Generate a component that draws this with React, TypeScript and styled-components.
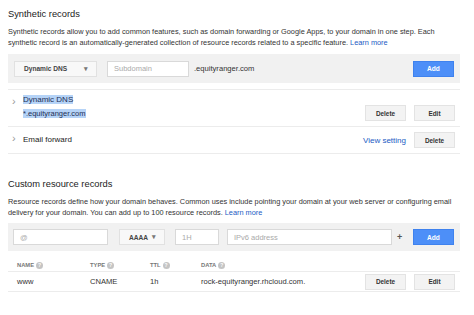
import React from "react";
import styled, { createGlobalStyle } from "styled-components";

const GlobalStyle = createGlobalStyle`
  body {
    margin: 0;
    background: #fff;
    font-family: "Liberation Sans", Arial, sans-serif;
    color: #222;
  }
`;

const App: React.FC = () => {
  return (
    <>
      <GlobalStyle />
      <Page>
        <Title>Synthetic records</Title>
        <Desc>
          Synthetic records allow you to add common features, such as domain forwarding or Google Apps, to your domain in one step. Each
          <br />
          synthetic record is an automatically-generated collection of resource records related to a specific feature. <Link>Learn more</Link>
        </Desc>
        <Panel>
          <Select width={83}>
            <span>Dynamic DNS</span>
            <Caret>▾</Caret>
          </Select>
          <Input width={82} style={{ marginLeft: 10 }}>
            <Placeholder>Subdomain</Placeholder>
          </Input>
          <Suffix>.equityranger.com</Suffix>
          <Spacer />
          <AddButton>Add</AddButton>
        </Panel>

        <List>
          <Row tall>
            <Chevron>›</Chevron>
            <RowText>
              <Selected>Dynamic DNS</Selected>
              <Sub><Selected>*.equityranger.com</Selected></Sub>
            </RowText>
            <Actions>
              <GrayButton>Delete</GrayButton>
              <GrayButton>Edit</GrayButton>
            </Actions>
          </Row>
          <Row>
            <Chevron>›</Chevron>
            <RowText>Email forward</RowText>
            <Actions>
              <Link>View setting</Link>
              <GrayButton>Delete</GrayButton>
            </Actions>
          </Row>
        </List>

        <Title second>Custom resource records</Title>
        <Desc>
          Resource records define how your domain behaves. Common uses include pointing your domain at your web server or configuring email
          <br />
          delivery for your domain. You can add up to 100 resource records. <Link>Learn more</Link>
        </Desc>
        <Panel compact>
          <Input width={95}>
            <Placeholder>@</Placeholder>
          </Input>
          <Select width={46} style={{ marginLeft: 11 }}>
            <span>AAAA</span>
            <Caret>▾</Caret>
          </Select>
          <Input width={44} style={{ marginLeft: 10 }}>
            <Placeholder>1H</Placeholder>
          </Input>
          <Input width={165} style={{ marginLeft: 8 }}>
            <Placeholder>IPv6 address</Placeholder>
          </Input>
          <Plus>+</Plus>
          <Spacer />
          <AddButton>Add</AddButton>
        </Panel>

        <Table>
          <HeadRow>
            <Cell w={73}>NAME <Help>?</Help></Cell>
            <Cell w={60}>TYPE <Help>?</Help></Cell>
            <Cell w={51}>TTL <Help>?</Help></Cell>
            <Cell>DATA <Help>?</Help></Cell>
          </HeadRow>
          <DataRow>
            <Cell w={73}>www</Cell>
            <Cell w={60}>CNAME</Cell>
            <Cell w={51}>1h</Cell>
            <Cell>rock-equityranger.rhcloud.com.</Cell>
            <Spacer />
            <Actions>
              <GrayButton>Delete</GrayButton>
              <GrayButton>Edit</GrayButton>
            </Actions>
          </DataRow>
        </Table>
      </Page>
    </>
  );
};

const Page = styled.div`
  width: 452px;
  padding: 0 14px 20px 8px;
`;

const Title = styled.div<{ second?: boolean }>`
  font-size: 9.3px;
  line-height: 14px;
  color: #222;
  padding-top: ${(p) => (p.second ? "23px" : "7px")};
`;

const Desc = styled.div`
  margin-top: 4.5px;
  font-size: 7.35px;
  line-height: 11px;
  color: #333;
  white-space: nowrap;
`;

const Link = styled.span`
  color: #1a5bc4;
  font-size: inherit;
`;

const Panel = styled.div<{ compact?: boolean }>`
  display: flex;
  align-items: center;
  background: #f1f1f1;
  height: ${(p) => (p.compact ? "28px" : "29px")};
  box-sizing: border-box;
  margin-top: ${(p) => (p.compact ? "5.5px" : "6.5px")};
  padding: 0 6px 0 ${(p) => (p.compact ? "5px" : "6px")};
`;

const Select = styled.div<{ width: number }>`
  width: ${(p) => p.width}px;
  height: 16px;
  box-sizing: border-box;
  display: flex;
  align-items: center;
  justify-content: space-between;
  padding: 0 8px 0 9px;
  background: #f8f8f8;
  border: 1px solid #e1e1e1;
  font-size: 6.6px;
  font-weight: bold;
  color: #444;
`;

const Caret = styled.span`
  font-size: 7px;
  color: #777;
`;

const Input = styled.div<{ width: number }>`
  width: ${(p) => p.width}px;
  height: 16px;
  box-sizing: border-box;
  display: flex;
  align-items: center;
  padding-left: 6px;
  background: #fff;
  border: 1px solid #d9d9d9;
`;

const Placeholder = styled.span`
  font-size: 7.5px;
  color: #aaa;
`;

const Suffix = styled.span`
  margin-left: 5px;
  font-size: 7.6px;
  color: #333;
`;

const Plus = styled.span`
  margin-left: 5px;
  font-size: 9px;
  color: #555;
  font-weight: bold;
`;

const Spacer = styled.div`
  flex: 1;
`;

const AddButton = styled.div`
  width: 41px;
  height: 16px;
  display: flex;
  align-items: center;
  justify-content: center;
  background: #4d8ff8;
  border: 1px solid #3f82ee;
  box-sizing: border-box;
  color: #fff;
  font-size: 6.6px;
  font-weight: bold;
`;

const List = styled.div`
  margin-top: 6px;
  border-top: 1px solid #ececec;
`;

const Row = styled.div<{ tall?: boolean }>`
  display: flex;
  align-items: ${(p) => (p.tall ? "flex-end" : "center")};
  height: ${(p) => (p.tall ? "31px" : "26px")};
  padding: ${(p) => (p.tall ? "0 5px 5px 0" : "0 5px 0 0")};
  border-bottom: 1px solid #ececec;
  font-size: 8px;
`;

const Chevron = styled.span`
  width: 11px;
  padding-left: 4px;
  align-self: flex-start;
  margin-top: 6px;
  font-size: 11px;
  line-height: 11px;
  color: #999;
`;

const RowText = styled.div`
  flex: 1;
  font-size: 8px;
  line-height: 14px;
  color: #222;
`;

const Sub = styled.div`
  font-size: 7.5px;
`;

const Selected = styled.span`
  background: #b5d3f7;
  color: #1f2f55;
`;

const Actions = styled.div`
  display: flex;
  align-items: center;
  gap: 8px;
  font-size: 8px;
`;

const GrayButton = styled.div`
  width: 41px;
  height: 16px;
  display: flex;
  align-items: center;
  justify-content: center;
  box-sizing: border-box;
  background: #f3f3f3;
  border: 1px solid #e3e3e3;
  color: #333;
  font-size: 6.4px;
  font-weight: bold;
`;

const Table = styled.div`
  margin-top: 8px;
`;

const HeadRow = styled.div`
  display: flex;
  align-items: center;
  height: 12px;
  padding-left: 9px;
  border-bottom: 1px solid #ececec;
  font-size: 5.8px;
  font-weight: bold;
  color: #777;
`;

const DataRow = styled.div`
  display: flex;
  align-items: center;
  height: 19px;
  padding: 0 5px 0 9px;
  border-bottom: 1px solid #ececec;
  font-size: 7.6px;
  color: #333;
`;

const Cell = styled.div<{ w?: number }>`
  width: ${(p) => (p.w ? `${p.w}px` : "auto")};
  display: flex;
  align-items: center;
  gap: 2px;
  white-space: nowrap;
`;

const Help = styled.span`
  width: 7px;
  height: 7px;
  border-radius: 50%;
  background: #c4c4c4;
  color: #fff;
  font-size: 5px;
  display: inline-flex;
  align-items: center;
  justify-content: center;
`;

export default App;
